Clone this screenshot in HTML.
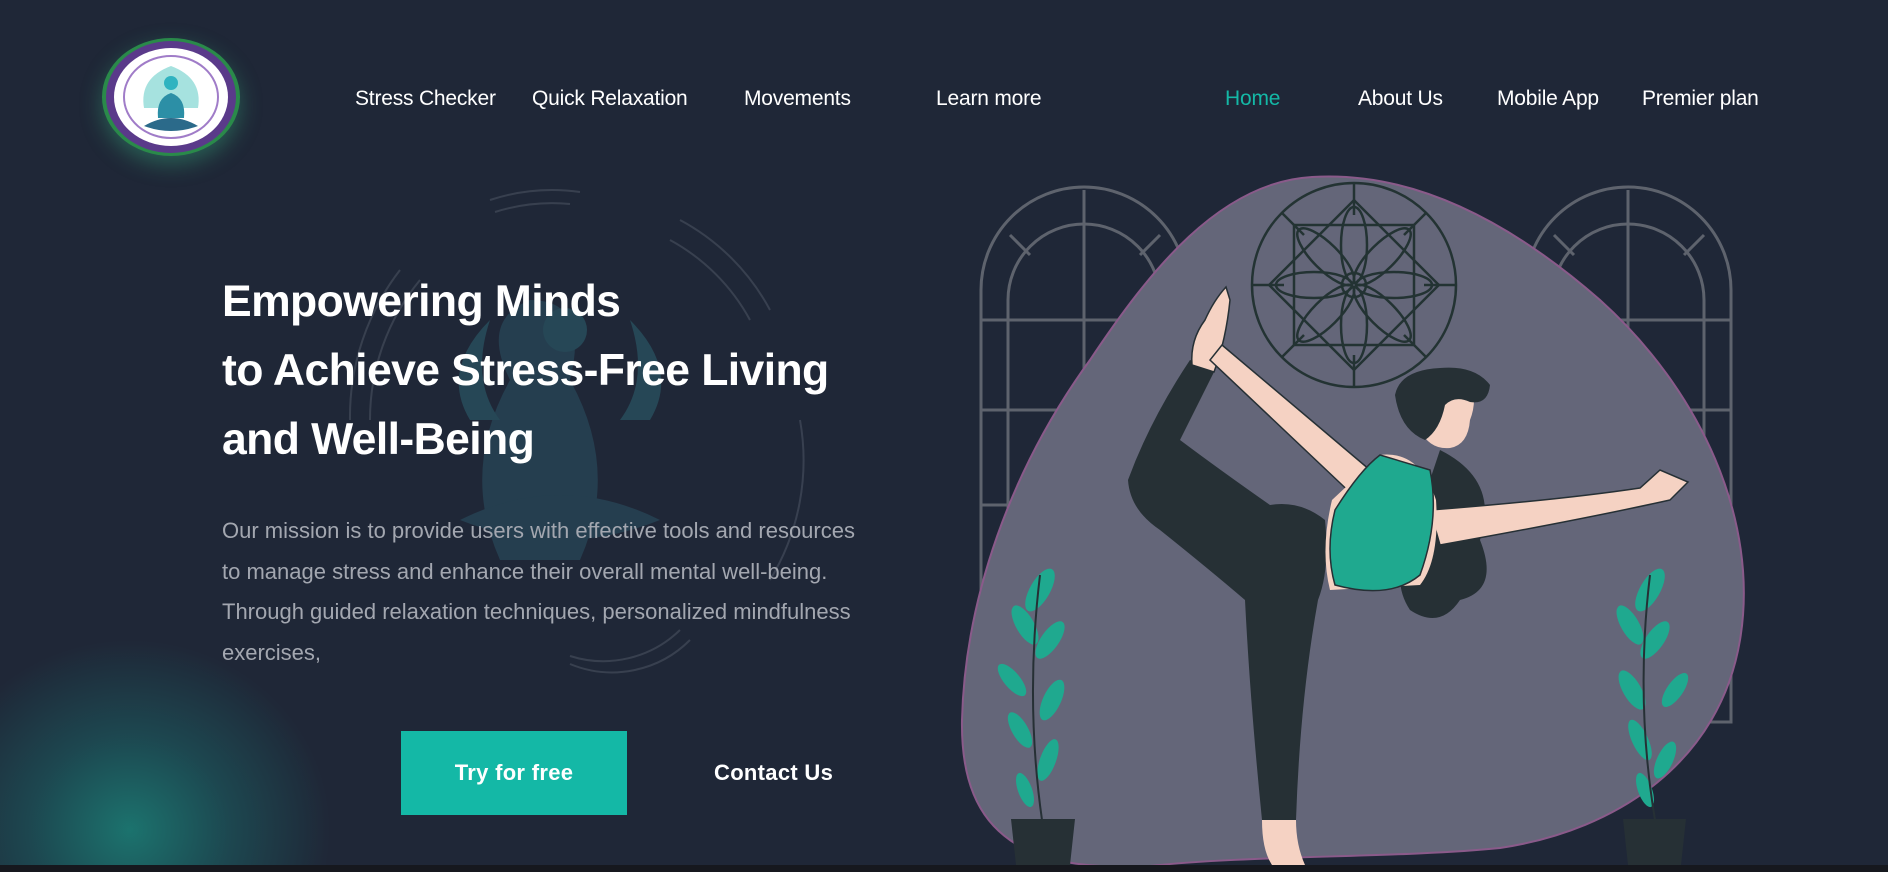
<!DOCTYPE html>
<html><head><meta charset="utf-8"><style>
*{margin:0;padding:0;box-sizing:border-box}
html,body{width:1888px;height:872px;overflow:hidden;background:#1f2737;font-family:"Liberation Sans",sans-serif;color:#fff}
#wrap{position:relative;width:1888px;height:872px;overflow:hidden;background:#1f2737}
.glow{position:absolute;left:0;top:640px;width:360px;height:225px;background:radial-gradient(ellipse 200px 190px at 130px 190px,rgba(26,140,128,.75) 0%,rgba(26,110,110,.45) 50%,rgba(31,39,55,0) 100%)}
.nav{position:absolute;top:87px;font-size:21px;white-space:nowrap;letter-spacing:-0.2px}
h1{position:absolute;left:222px;top:267px;font-size:44.5px;font-weight:bold;line-height:69px;letter-spacing:-0.6px;white-space:nowrap}
p{position:absolute;left:222px;top:511px;font-size:22px;line-height:40.5px;color:#a3a7b0;white-space:nowrap}
.btn{position:absolute;left:401px;top:731px;width:226px;height:84px;background:#14b8a6;font-size:22px;font-weight:bold;display:flex;align-items:center;justify-content:center;letter-spacing:0.3px}
.contact{position:absolute;left:714px;top:760px;font-size:22px;font-weight:bold;letter-spacing:0.3px}
.bottom{position:absolute;left:0;top:865px;width:1888px;height:7px;background:#16181e}
</style></head><body><div id="wrap">
<div class="glow"></div>
<svg style="position:absolute;left:0;top:0" width="960" height="872">
<g fill="none" stroke="#4a5260" stroke-width="2" opacity=".6">
<path d="M490 200 A200 200 0 0 1 580 192"/><path d="M495 212 A190 190 0 0 1 570 204"/>
<path d="M680 220 A220 220 0 0 1 770 310"/><path d="M670 240 A200 200 0 0 1 750 320"/>
<path d="M400 270 A240 240 0 0 0 350 420"/><path d="M420 280 A220 220 0 0 0 370 420"/>
<path d="M800 420 A230 230 0 0 1 770 580"/>
<path d="M570 664 A110 110 0 0 0 690 640"/><path d="M570 656 A110 110 0 0 0 680 630"/>
</g>
<g opacity=".45">
<path d="M500 560 Q460 470 510 380 Q480 320 530 300 Q590 300 570 380 Q620 470 580 560 Z" fill="#2d5a6c"/>
<circle cx="565" cy="330" r="22" fill="#2f6f7c"/>
<path d="M470 420 Q440 370 490 320 Q470 380 500 420Z M650 420 Q680 370 630 320 Q650 380 620 420Z" fill="#2f6f7c"/>
<path d="M460 520 Q560 470 660 520 Q560 560 460 520Z" fill="#2d5a6c"/>
</g>
</svg>
<div style="position:absolute;left:102px;top:38px;width:138px;height:118px;border-radius:50%;box-shadow:0 8px 22px rgba(60,200,140,.35);background:#2a8a4a"></div>
<div style="position:absolute;left:106px;top:41px;width:130px;height:112px;border-radius:50%;background:#5a3a8a"></div>
<div style="position:absolute;left:114px;top:48px;width:114px;height:98px;border-radius:50%;background:#fff"></div>
<svg style="position:absolute;left:114px;top:48px" width="114" height="98">
<ellipse cx="57" cy="49" rx="47" ry="41" fill="none" stroke="#a07cc8" stroke-width="2"/>
<path d="M30 60 Q25 30 57 18 Q89 30 84 60 Z" fill="#a6e2df"/>
<circle cx="57" cy="35" r="7" fill="#2fb3c0"/>
<path d="M44 70 Q42 50 57 45 Q72 50 70 70Z" fill="#2c8fa6"/>
<path d="M30 78 Q57 62 84 78 Q57 88 30 78Z" fill="#2b6a8a"/>
</svg>
<div class="nav" style="left:355px">Stress Checker</div>
<div class="nav" style="left:532px">Quick Relaxation</div>
<div class="nav" style="left:744px">Movements</div>
<div class="nav" style="left:936px">Learn more</div>
<div class="nav" style="left:1225px;color:#14b8a6">Home</div>
<div class="nav" style="left:1358px">About Us</div>
<div class="nav" style="left:1497px">Mobile App</div>
<div class="nav" style="left:1642px">Premier plan</div>
<h1>Empowering Minds<br>to Achieve Stress-Free Living<br>and Well-Being</h1>
<p>Our mission is to provide users with effective tools and resources<br>to manage stress and enhance their overall mental well-being.<br>Through guided relaxation techniques, personalized mindfulness<br>exercises,</p>
<div class="btn">Try for free</div>
<div class="contact">Contact Us</div>
<svg style="position:absolute;left:0;top:0" width="1888" height="872">
<g fill="none" stroke="#5e636d" stroke-width="3">
<path d="M981 800 V290 A103 103 0 0 1 1187 290 V800"/>
<path d="M1008 800 V300 A76 76 0 0 1 1160 300 V800"/>
<path d="M1084 190 V800 M981 320 H1187 M981 410 H1187 M981 505 H1187 M981 600 H1187 M1010 235 L1030 255 M1160 235 L1140 255"/>
<path d="M1525 722 V290 A103 103 0 0 1 1731 290 V722 Z"/>
<path d="M1552 722 V300 A76 76 0 0 1 1704 300 V722"/>
<path d="M1628 190 V722 M1525 320 H1731 M1525 410 H1731 M1525 505 H1731 M1525 600 H1731 M1554 235 L1574 255 M1704 235 L1684 255"/>
</g>
<path d="M1312 177 C1420 170 1520 230 1600 300 C1700 390 1760 520 1740 640 C1720 760 1620 830 1500 848 C1400 858 1250 855 1150 866 C1030 872 960 840 962 720 C965 600 1010 470 1090 360 C1150 270 1220 182 1312 177 Z" fill="#646679" stroke="#8a5a8a" stroke-width="2"/>
<g fill="none" stroke="#233333" stroke-width="2.5">
<circle cx="1354" cy="285" r="102"/>
<circle cx="1354" cy="285" r="12"/>
<g id="pet"><ellipse cx="1354" cy="245" rx="13" ry="38"/></g>
<use href="#pet" transform="rotate(45 1354 285)"/><use href="#pet" transform="rotate(90 1354 285)"/><use href="#pet" transform="rotate(135 1354 285)"/><use href="#pet" transform="rotate(180 1354 285)"/><use href="#pet" transform="rotate(225 1354 285)"/><use href="#pet" transform="rotate(270 1354 285)"/><use href="#pet" transform="rotate(315 1354 285)"/>
<rect x="1294" y="225" width="120" height="120"/>
<rect x="1294" y="225" width="120" height="120" transform="rotate(45 1354 285)"/>
<path d="M1354 183 V215 M1354 355 V387 M1252 285 H1284 M1424 285 H1456 M1282 213 L1304 235 M1426 213 L1404 235 M1282 357 L1304 335 M1426 357 L1404 335"/>
</g>
<path d="M1440 450 Q1500 480 1480 540 Q1500 590 1460 600 Q1440 630 1410 610 Q1390 580 1410 540Z" fill="#263035"/>
<path d="M1190 360 Q1150 420 1128 480 Q1130 510 1160 530 Q1210 570 1245 600 Q1250 700 1262 820 L1296 820 Q1300 700 1318 600 Q1330 570 1325 520 Q1300 500 1270 505 Q1220 470 1180 440 Q1200 400 1215 370 Z" fill="#263035"/>
<path d="M1262 820 Q1262 850 1272 865 L1305 865 Q1296 845 1296 820Z" fill="#f5d2c3"/>
<path d="M1226 287 Q1214 300 1205 320 Q1190 340 1192 365 L1214 372 Q1226 340 1230 300 Z" fill="#f5d2c3" stroke="#263035" stroke-width="1.5"/>
<path d="M1222 345 L1370 470 L1358 500 L1210 360Z" fill="#f5d2c3" stroke="#263035" stroke-width="1.5"/>
<path d="M1430 510 Q1560 500 1640 488 L1660 470 L1688 482 L1670 500 Q1580 520 1440 545Z" fill="#f5d2c3" stroke="#263035" stroke-width="1.5"/>
<path d="M1332 500 Q1320 550 1330 590 L1420 585 Q1440 560 1436 500 Q1420 450 1380 455Z" fill="#f5d2c3"/>
<path d="M1335 510 Q1360 470 1380 455 L1430 470 Q1440 520 1420 575 Q1390 600 1335 585 Q1325 550 1335 510Z" fill="#1fa98f" stroke="#263035" stroke-width="1.5"/>
<path d="M1410 380 Q1430 372 1470 378 Q1478 400 1470 420 Q1468 445 1450 448 Q1430 450 1420 430 Z" fill="#f5d2c3"/>
<path d="M1395 395 Q1400 370 1440 368 Q1475 365 1490 385 Q1488 405 1470 402 Q1455 395 1445 405 Q1440 430 1425 440 Q1400 430 1395 395Z" fill="#263035"/>
<g fill="#1fa98f">
<ellipse cx="1040" cy="590" rx="10" ry="24" transform="rotate(30 1040 590)"/>
<ellipse cx="1025" cy="625" rx="9" ry="22" transform="rotate(-30 1025 625)"/>
<ellipse cx="1050" cy="640" rx="9" ry="22" transform="rotate(35 1050 640)"/>
<ellipse cx="1012" cy="680" rx="8" ry="20" transform="rotate(-40 1012 680)"/>
<ellipse cx="1052" cy="700" rx="9" ry="22" transform="rotate(25 1052 700)"/>
<ellipse cx="1020" cy="730" rx="8" ry="20" transform="rotate(-30 1020 730)"/>
<ellipse cx="1048" cy="760" rx="8" ry="22" transform="rotate(20 1048 760)"/>
<ellipse cx="1025" cy="790" rx="7" ry="18" transform="rotate(-20 1025 790)"/>
<ellipse cx="1650" cy="590" rx="10" ry="24" transform="rotate(30 1650 590)"/>
<ellipse cx="1630" cy="625" rx="9" ry="22" transform="rotate(-30 1630 625)"/>
<ellipse cx="1655" cy="640" rx="9" ry="22" transform="rotate(35 1655 640)"/>
<ellipse cx="1632" cy="690" rx="9" ry="22" transform="rotate(-30 1632 690)"/>
<ellipse cx="1675" cy="690" rx="8" ry="20" transform="rotate(35 1675 690)"/>
<ellipse cx="1640" cy="740" rx="8" ry="22" transform="rotate(-25 1640 740)"/>
<ellipse cx="1665" cy="760" rx="8" ry="20" transform="rotate(25 1665 760)"/>
<ellipse cx="1645" cy="790" rx="7" ry="18" transform="rotate(-20 1645 790)"/>
</g>
<path d="M1040 575 Q1025 700 1042 820 M1650 575 Q1635 700 1655 820" stroke="#263035" stroke-width="2" fill="none"/>
<path d="M1011 819 H1075 L1070 865 H1016Z M1623 819 H1686 L1681 865 H1628Z" fill="#263035"/>
</svg>
<div class="bottom"></div>
</div></body></html>
